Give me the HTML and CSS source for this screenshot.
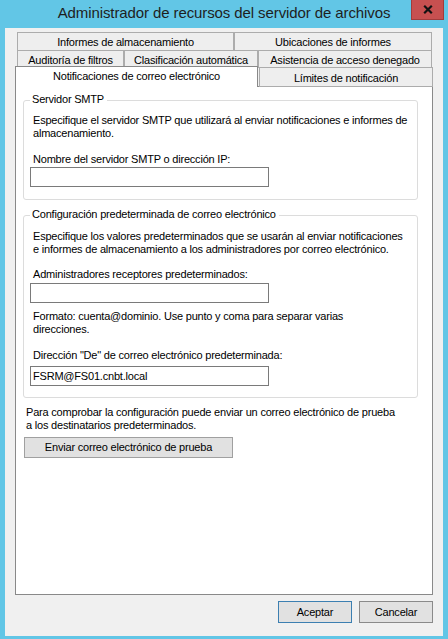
FILE: index.html
```html
<!DOCTYPE html>
<html lang="es">
<head>
    <meta charset="utf-8">
    <title>Administrador de recursos del servidor de archivos</title>
    <link rel="stylesheet" href="styles.css">
</head>
<body>
<div class="window">
    <div class="titlebar">
        <h1 class="title">Administrador de recursos del servidor de archivos</h1>
        <button class="close" title="Cerrar">
            <svg width="10" height="9" viewBox="0 0 10 9">
                <path d="M1.2 0.8 L8.8 8.2 M8.8 0.8 L1.2 8.2" stroke="#111" stroke-width="2.2" fill="none"/>
            </svg>
        </button>
    </div>

    <div class="client">
        <!-- pestañas en tres filas, la seleccionada queda abajo -->
        <div class="tabs">
            <div class="tab-row row-top">
                <div class="tab w-informes">Informes de almacenamiento</div>
                <div class="tab w-ubicaciones">Ubicaciones de informes</div>
            </div>
            <div class="tab-row row-mid">
                <div class="tab w-auditoria">Auditoría de filtros</div>
                <div class="tab w-clasificacion">Clasificación automática</div>
                <div class="tab w-asistencia">Asistencia de acceso denegado</div>
            </div>
            <div class="tab-row row-bottom">
                <div class="tab tab-active">Notificaciones de correo electrónico</div>
                <div class="tab w-limites">Límites de notificación</div>
            </div>
        </div>

        <div class="panel">
            <div class="group group-smtp">
                <div class="group-title">Servidor SMTP</div>
                <p class="note note-smtp">Especifique el servidor SMTP que utilizará al enviar notificaciones e informes de<br>almacenamiento.</p>
                <label class="caption caption-smtp" for="smtp">Nombre del servidor SMTP o dirección IP:</label>
                <input class="field field-smtp" type="text" id="smtp">
            </div>

            <div class="group group-mail">
                <div class="group-title">Configuración predeterminada de correo electrónico</div>
                <p class="note note-mail">Especifique los valores predeterminados que se usarán al enviar notificaciones<br>e informes de almacenamiento a los administradores por correo electrónico.</p>
                <label class="caption caption-admins" for="admins">Administradores receptores predeterminados:</label>
                <input class="field field-admins" type="text" id="admins">
                <p class="note note-format">Formato: cuenta@dominio. Use punto y coma para separar varias<br>direcciones.</p>
                <label class="caption caption-from" for="from">Dirección "De" de correo electrónico predeterminada:</label>
                <input class="field field-from" type="text" id="from" value="FSRM@FS01.cnbt.local">
            </div>

            <p class="note note-test">Para comprobar la configuración puede enviar un correo electrónico de prueba<br>a los destinatarios predeterminados.</p>
            <button class="btn btn-test">Enviar correo electrónico de prueba</button>
        </div>

        <div class="footer">
            <button class="btn btn-dialog btn-default">Aceptar</button>
            <button class="btn btn-dialog">Cancelar</button>
        </div>
    </div>
</div>
</body>
</html>
```

FILE: styles.css
```css
body {
    margin: 0;
    background-color: #62c6e6;
    font-family: "Liberation Sans", Arial, sans-serif;
    font-size: 11px;
    line-height: 13px;
    letter-spacing: -0.2px;
    color: #000;
}

.window {
    width: 448px;
    height: 639px;
}

/* barra de titulo */
.titlebar {
    height: 28px;
    display: grid;
    grid-template-columns: 1fr auto 1fr;
    align-items: start;
}

.title {
    grid-column: 2;
    margin: 0;
    font-size: 15px;
    font-weight: normal;
    line-height: 26px;
    letter-spacing: -0.1px;
    color: #1e1e1e;
    white-space: nowrap;
}

.close {
    grid-column: 3;
    justify-self: end;
    width: 33px;
    height: 20px;
    margin-right: 4px;
    padding: 0;
    background-color: #c75050;
    border: 1px solid #a13c3c;
    border-top: none;
    display: flex;
    align-items: center;
    justify-content: center;
}

.client {
    margin: 0 5px;
    height: 608px;
    box-sizing: border-box;
    padding: 4px 10px 0;
    background-color: #f0f0f0;
}

/* pestañas */
.tab-row {
    display: flex;
    align-items: flex-start;
    white-space: nowrap;
}

.row-top,
.row-mid {
    margin-left: 2px;
}

.row-mid,
.row-bottom {
    margin-top: -1px;
}

.tab {
    flex: none;
    box-sizing: border-box;
    border: 1px solid #acacac;
    background-color: #eeeeee;
    text-align: center;
}

.row-top .tab {
    height: 19px;
    padding-top: 3px;
}

.row-mid .tab {
    height: 18px;
    padding-top: 3px;
}

.w-informes { width: 217px; }
.w-ubicaciones { width: 198px; }
.w-auditoria { width: 107px; }
.w-clasificacion { width: 134px; }
.w-asistencia { width: 174px; }

.w-limites {
    width: 174px;
    height: 20px;
    padding-top: 4px;
    margin-left: 1px;
}

.tab-active {
    position: relative;
    z-index: 1;
    width: 243px;
    height: 21px;
    margin-top: -1px;
    padding-top: 3px;
    background-color: #fff;
    border-color: #898989;
    border-bottom: none;
}

.panel {
    margin-top: -1px;
    height: 509px;
    box-sizing: border-box;
    border: 1px solid #898989;
    background-color: #fff;
    overflow: hidden;
}

/* cuadros de grupo */
.group {
    border: 1px solid #dcdcdc;
    border-radius: 3px;
    margin: 13px 14px 0 7px;
    padding: 0 0 12px 6px;
}

.group-mail {
    margin-top: 15px;
    padding-bottom: 11px;
}

.group-title {
    display: table;
    margin-top: -8px;
    padding: 0 3px 0 2px;
    background-color: #fff;
}

.note {
    margin: 0;
    white-space: nowrap;
}

.group .note,
.caption {
    margin-left: 3px;
}

.caption {
    display: block;
}

.note-smtp { margin-top: 8px; }
.caption-smtp { margin-top: 13px; }
.field-smtp { margin-top: 1px; }

.note-mail { margin-top: 9px; }
.caption-admins { margin-top: 12px; }
.field-admins { margin-top: 2px; }
.note-format { margin-top: 7px; }
.caption-from { margin-top: 13px; }
.field-from { margin-top: 4px; }

.field {
    display: block;
    width: 239px;
    height: 20px;
    box-sizing: border-box;
    margin-bottom: 0;
    padding: 0 2px;
    border: 1px solid #7a7a7a;
    background-color: #fff;
    font: inherit;
    letter-spacing: inherit;
    color: #000;
    outline: none;
}

.note-test {
    margin: 8px 0 0 10px;
}

/* botones */
.btn {
    display: block;
    box-sizing: border-box;
    padding: 0;
    background-color: #e1e1e1;
    border: 1px solid #adadad;
    font: inherit;
    letter-spacing: inherit;
    color: #000;
}

.btn-test {
    width: 209px;
    height: 21px;
    margin: 5px 0 0 8px;
    border-color: #a0a0a0;
}

.footer {
    display: flex;
    justify-content: flex-end;
    gap: 7px;
    margin-top: 6px;
}

.btn-dialog {
    width: 74px;
    height: 22px;
    border-color: #8a8a8a;
}

.btn-default {
    border-color: #3c7fb1;
}
```
